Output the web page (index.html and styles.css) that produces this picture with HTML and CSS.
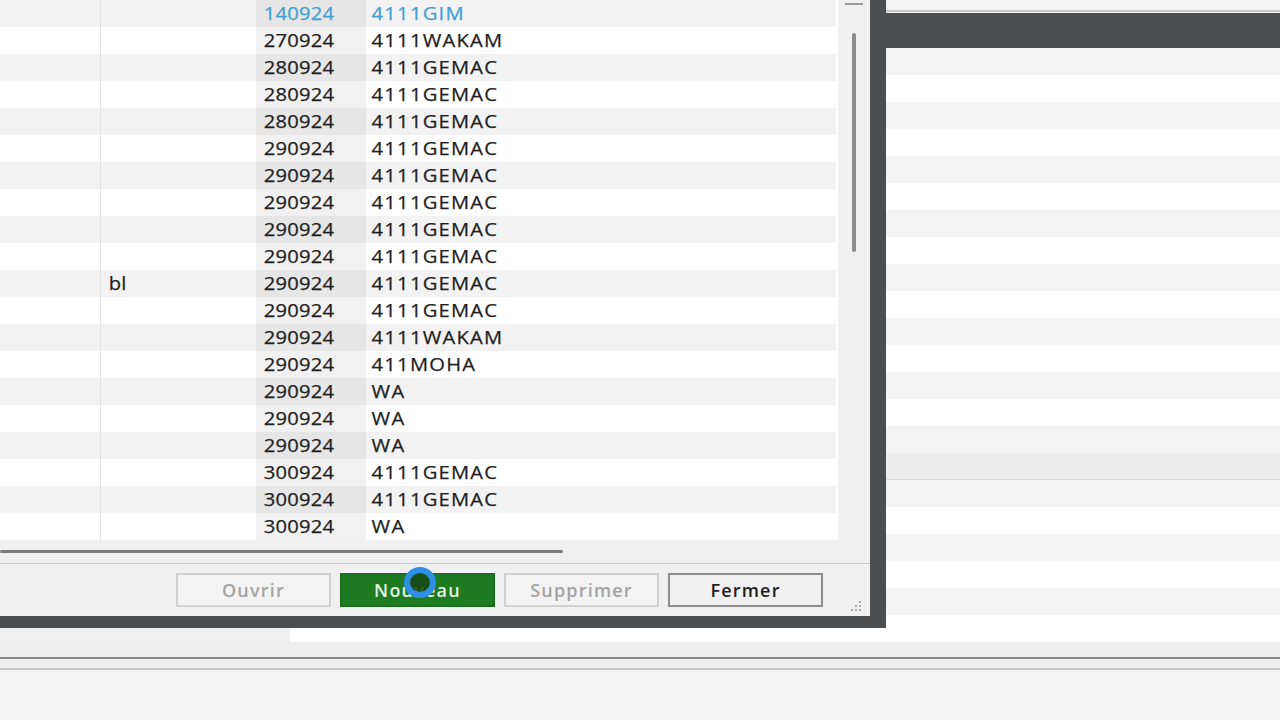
FILE: index.html
```html
<!DOCTYPE html>
<html lang="fr">
<head>
    <meta charset="UTF-8">
    <title>Pièces</title>
    <link rel="stylesheet" href="styles.css">
</head>
<body>

    <!-- application derrière la fenêtre -->
    <div class="app">
        <div class="app-top"></div>
        <div class="app-head"></div>
        <div class="app-rows">
            <div class="app-row"><div class="app-fix"></div></div>
            <div class="app-row"><div class="app-fix"></div></div>
            <div class="app-row"><div class="app-fix"></div></div>
            <div class="app-row"><div class="app-fix"></div></div>
            <div class="app-row"><div class="app-fix"></div></div>
            <div class="app-row"><div class="app-fix"></div></div>
            <div class="app-row"><div class="app-fix"></div></div>
            <div class="app-row"><div class="app-fix"></div></div>
            <div class="app-row"><div class="app-fix"></div></div>
            <div class="app-row"><div class="app-fix"></div></div>
            <div class="app-row"><div class="app-fix"></div></div>
            <div class="app-row"><div class="app-fix"></div></div>
            <div class="app-row"><div class="app-fix"></div></div>
            <div class="app-row"><div class="app-fix"></div></div>
            <div class="app-row"><div class="app-fix"></div></div>
            <div class="app-row mark"><div class="app-fix"></div></div>
            <div class="app-row"><div class="app-fix"></div></div>
            <div class="app-row"><div class="app-fix"></div></div>
            <div class="app-row"><div class="app-fix"></div></div>
            <div class="app-row"><div class="app-fix"></div></div>
            <div class="app-row"><div class="app-fix"></div></div>
            <div class="app-row"><div class="app-fix"></div></div>
        </div>
        <div class="app-foot"></div>
        <div class="app-status"></div>
    </div>

    <!-- fenêtre de dialogue -->
    <div class="dialog">
        <div class="dlg-main">
            <div class="grid">
                <div class="grid-row sel"><div class="c1"></div><div class="c2"></div><div class="c3">140924</div><div class="c4">4111GIM</div></div>
                <div class="grid-row"><div class="c1"></div><div class="c2"></div><div class="c3">270924</div><div class="c4">4111WAKAM</div></div>
                <div class="grid-row"><div class="c1"></div><div class="c2"></div><div class="c3">280924</div><div class="c4">4111GEMAC</div></div>
                <div class="grid-row"><div class="c1"></div><div class="c2"></div><div class="c3">280924</div><div class="c4">4111GEMAC</div></div>
                <div class="grid-row"><div class="c1"></div><div class="c2"></div><div class="c3">280924</div><div class="c4">4111GEMAC</div></div>
                <div class="grid-row"><div class="c1"></div><div class="c2"></div><div class="c3">290924</div><div class="c4">4111GEMAC</div></div>
                <div class="grid-row"><div class="c1"></div><div class="c2"></div><div class="c3">290924</div><div class="c4">4111GEMAC</div></div>
                <div class="grid-row"><div class="c1"></div><div class="c2"></div><div class="c3">290924</div><div class="c4">4111GEMAC</div></div>
                <div class="grid-row"><div class="c1"></div><div class="c2"></div><div class="c3">290924</div><div class="c4">4111GEMAC</div></div>
                <div class="grid-row"><div class="c1"></div><div class="c2"></div><div class="c3">290924</div><div class="c4">4111GEMAC</div></div>
                <div class="grid-row"><div class="c1"></div><div class="c2">bl</div><div class="c3">290924</div><div class="c4">4111GEMAC</div></div>
                <div class="grid-row"><div class="c1"></div><div class="c2"></div><div class="c3">290924</div><div class="c4">4111GEMAC</div></div>
                <div class="grid-row"><div class="c1"></div><div class="c2"></div><div class="c3">290924</div><div class="c4">4111WAKAM</div></div>
                <div class="grid-row"><div class="c1"></div><div class="c2"></div><div class="c3">290924</div><div class="c4">411MOHA</div></div>
                <div class="grid-row"><div class="c1"></div><div class="c2"></div><div class="c3">290924</div><div class="c4">WA</div></div>
                <div class="grid-row"><div class="c1"></div><div class="c2"></div><div class="c3">290924</div><div class="c4">WA</div></div>
                <div class="grid-row"><div class="c1"></div><div class="c2"></div><div class="c3">290924</div><div class="c4">WA</div></div>
                <div class="grid-row"><div class="c1"></div><div class="c2"></div><div class="c3">300924</div><div class="c4">4111GEMAC</div></div>
                <div class="grid-row"><div class="c1"></div><div class="c2"></div><div class="c3">300924</div><div class="c4">4111GEMAC</div></div>
                <div class="grid-row"><div class="c1"></div><div class="c2"></div><div class="c3">300924</div><div class="c4">WA</div></div>
            </div>
            <div class="vscroll">
                <div class="vscroll-up"></div>
                <div class="vscroll-thumb"></div>
            </div>
        </div>

        <div class="hscroll">
            <div class="hscroll-thumb"></div>
        </div>

        <div class="btnbar">
            <button class="btn off">Ouvrir</button>
            <button class="btn green">Nouveau</button>
            <button class="btn off">Supprimer</button>
            <button class="btn">Fermer</button>

            <svg class="grip" width="14" height="12" viewBox="0 0 14 12">
                <rect x="11" y="0" width="2" height="2"/>
                <rect x="7" y="4" width="2" height="2"/>
                <rect x="11" y="4" width="2" height="2"/>
                <rect x="3" y="8" width="2" height="2"/>
                <rect x="7" y="8" width="2" height="2"/>
                <rect x="11" y="8" width="2" height="2"/>
            </svg>

            <!-- curseur de la souris (enregistrement) -->
            <div class="cursor-ring"></div>
        </div>
    </div>

</body>
</html>
```

FILE: styles.css
```css
* {
    margin: 0;
    box-sizing: border-box;
}
body {
    width: 1280px;
    height: 720px;
    overflow: hidden;
    background-color: #f3f3f3;
    font-family: 'Open Sans', sans-serif;
    color: #1f1f1f;
    position: relative;
}

/* application en fond */
.app-top {
    height: 12px;
    background-color: #f3f3f3;
    border-bottom: 2px solid #c4c4c4;
}
.app-head {
    height: 35px;
    margin-top: 1px;
    background-color: #4b4e51;
}
.app-row {
    height: 27px;
    background-color: #ffffff;
}
.app-row:nth-child(odd) {
    background-color: #f3f3f3;
}
.app-row.mark {
    background-color: #ededed;
    box-shadow: inset 0 -1px #d9d9d9;
}
.app-fix {
    width: 290px;
    height: 100%;
    background-color: #efefef;
}
.app-foot {
    height: 17px;
    background-color: #eeeeee;
    border-bottom: 2px solid #898989;
}
.app-status {
    height: 11px;
    background-color: #f0f0f0;
    border-bottom: 2px solid #c6c6c6;
}

/* fenêtre */
.dialog {
    position: absolute;
    left: 0;
    top: 0;
    width: 886px;
    border-right: 16px solid #4b4e51;
    border-bottom: 12px solid #4b4e51;
    background-color: #f0f0f0;
    display: flex;
    flex-direction: column;
}
.dlg-main {
    display: flex;
    height: 540px;
}
.grid {
    width: 838px;
    background-color: #ffffff;
}
/* la colonne triée (date) est légèrement grisée */
.grid-row {
    display: flex;
    width: 836px;
    height: 27px;
    line-height: 27px;
    font-size: 18px;
    -webkit-text-stroke: 0.25px currentColor;
    background: linear-gradient(90deg, transparent 256px, rgba(0, 0, 0, 0.055) 256px, rgba(0, 0, 0, 0.055) 366px, transparent 366px), #ffffff;
}
.grid-row:nth-child(odd) {
    background: linear-gradient(90deg, transparent 256px, rgba(0, 0, 0, 0.05) 256px, rgba(0, 0, 0, 0.05) 366px, transparent 366px), #f2f2f2;
}
.grid-row.sel {
    color: #3f9fd3;
}
.c1 {
    width: 101px;
    border-right: 1px solid #e2e2e2;
}
.c2 {
    width: 155px;
    padding-left: 7px;
    transform: scaleX(1.12);
    transform-origin: left;
}
.c3 {
    width: 110px;
    padding-left: 7px;
    letter-spacing: 0.2px;
    transform: scaleX(1.12);
    transform-origin: left;
}
.c4 {
    flex: 1;
    padding-left: 5px;
    letter-spacing: 1.1px;
    transform: scaleX(1.12);
    transform-origin: left;
}
.vscroll {
    width: 32px;
    padding-top: 3px;
}
.vscroll-up {
    width: 18px;
    height: 2px;
    margin-left: 7px;
    background-color: #9a9a9a;
}
.vscroll-thumb {
    width: 4px;
    height: 219px;
    margin: 28px 0 0 14px;
    border-radius: 2px;
    background-color: #8c8c8c;
}
.hscroll {
    height: 23px;
    padding-top: 10px;
}
.hscroll-thumb {
    width: 563px;
    height: 3px;
    border-radius: 2px;
    background-color: #7a7a7a;
}

/* boutons */
.btnbar {
    position: relative;
    height: 53px;
    border-top: 1px solid #c9c9c9;
    display: flex;
    justify-content: flex-end;
    align-items: flex-start;
    gap: 9px;
    padding: 9px 47px 0 0;
}
.btn {
    width: 155px;
    height: 34px;
    font-family: 'Open Sans', sans-serif;
    font-size: 18px;
    font-weight: 600;
    letter-spacing: 1.2px;
    color: #1e1e1e;
    background-color: #f0f0f0;
    border: 2px solid #8c8c8c;
    padding: 0;
}
.btn.off {
    color: #a3a3a3;
    border-color: #d0d0d0;
    background-color: #f3f3f3;
}
.btn.green {
    color: #e4f2e0;
    background-color: #1f7b22;
    border-color: #1b6f1e;
}
.grip {
    position: absolute;
    right: 8px;
    bottom: 3px;
    fill: #aaaaaa;
}
.cursor-ring {
    position: absolute;
    left: 404px;
    top: 3px;
    width: 32px;
    height: 31px;
    border-radius: 50%;
    border: 6px solid #2f8fe5;
    background-color: rgba(22, 72, 26, 0.85);
}
```
